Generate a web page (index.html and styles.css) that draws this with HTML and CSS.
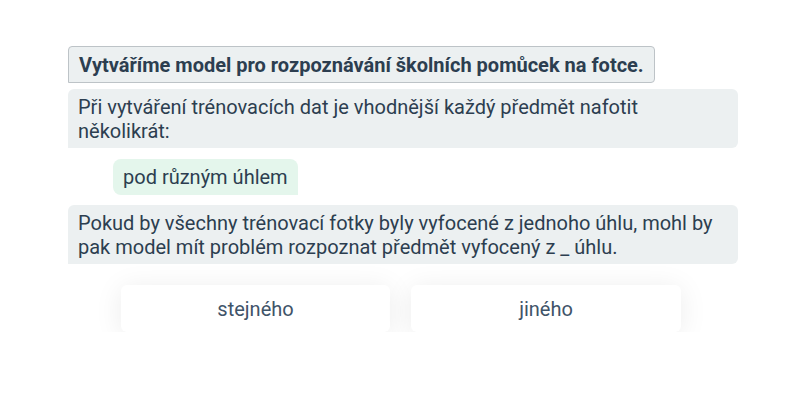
FILE: index.html
```html
<!DOCTYPE html>
<html lang="cs">
<head>
<meta charset="utf-8">
<link rel="stylesheet" href="styles.css">
</head>
<body>
<main class="chat">
  <div class="title">Vytváříme model pro rozpoznávání školních pomůcek na fotce.</div>
  <div class="bubble">Při vytváření trénovacích dat je vhodnější každý předmět nafotit několikrát:</div>
  <div class="answer-row"><div class="chip">pod různým úhlem</div></div>
  <div class="bubble">Pokud by všechny trénovací fotky byly vyfocené z jednoho úhlu, mohl by pak model mít problém rozpoznat předmět vyfocený z _ úhlu.</div>
  <div class="options">
    <button class="option">stejného</button>
    <button class="option">jiného</button>
  </div>
</main>
</body>
</html>
```
FILE: styles.css
```css
html, body {
  margin: 0;
  background: #ffffff;
}
body {
  font-family: Roboto, "Liberation Sans", sans-serif;
  font-size: 20px;
  line-height: 24px;
  color: #2c3e50;
}
.chat {
  width: 670px;
  margin: 46px 0 0 68px;
  display: flex;
  flex-direction: column;
}
.title {
  align-self: flex-start;
  background: #ecf0f1;
  border: 1px solid #bdc3c7;
  border-radius: 4px 4px 4px 0;
  padding: 5.5px 10px;
  font-weight: 700;
}
.bubble {
  background: #ecf0f1;
  border-radius: 6px 6px 6px 0;
  padding: 5.5px 10px;
  margin-top: 6px;
}
.answer-row {
  display: flex;
  padding-left: 45px;
  margin: 11px 0 10px;
}
.chip {
  background: #e4f6ec;
  border-radius: 8px 8px 0 8px;
  padding: 6px 10px;
}
.answer-row + .bubble {
  margin-top: 0;
}
.options {
  display: grid;
  grid-template-columns: 269px 270px;
  column-gap: 21px;
  padding-left: 53px;
  margin-top: 21px;
}
.option {
  height: 47px;
  background: #ffffff;
  border: none;
  border-radius: 6px;
  box-shadow: 0 3px 28px rgba(0, 0, 0, 0.08);
  font-family: Roboto, "Liberation Sans", sans-serif;
  font-size: 20px;
  color: #3f5469;
  padding: 0;
  cursor: pointer;
}
```
